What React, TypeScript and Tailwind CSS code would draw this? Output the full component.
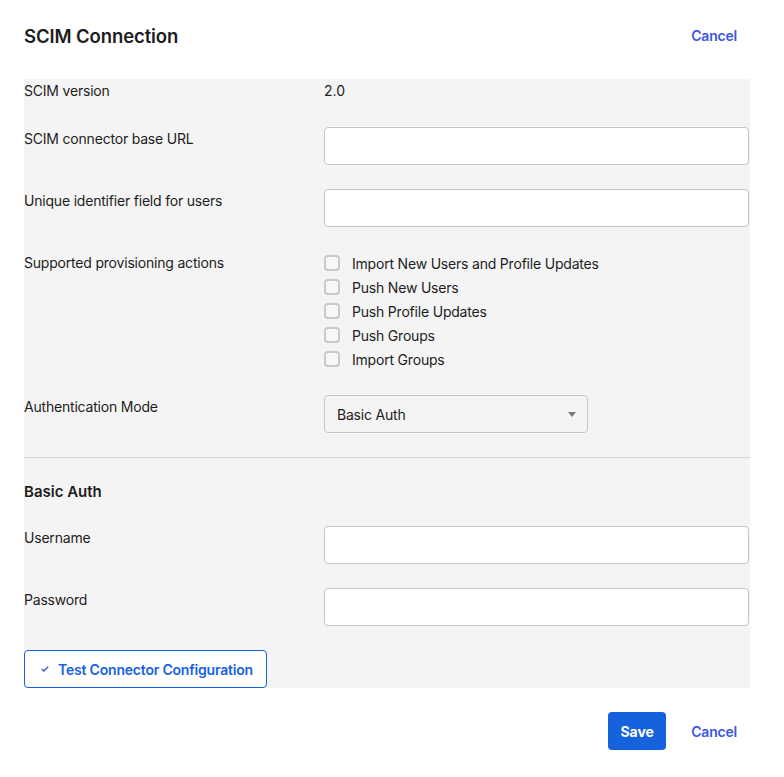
const ACTIONS = [
  'Import New Users and Profile Updates',
  'Push New Users',
  'Push Profile Updates',
  'Push Groups',
  'Import Groups',
];

function Label({ children }: { children: React.ReactNode }) {
  return <div className="w-[300px] shrink-0 pt-[2px] text-[14px] leading-5 tracking-[-0.2px] text-[#1d1d21]">{children}</div>;
}

function TextInput() {
  return <input type="text" className="h-[38px] flex-1 rounded-[4px] border border-[#c4c4c9] bg-white px-3 text-sm outline-none" />;
}

export default function App() {
  return (
    <div className="min-h-screen bg-white font-['Inter',sans-serif] text-[#1d1d21]">
      <div className="w-[750px] pl-6">
        <header className="flex h-[79px] items-start justify-between pt-[24px]">
          <h1 className="text-[18.5px] leading-6 font-semibold tracking-[-0.1px]">SCIM Connection</h1>
          <button type="button" className="px-[13px] text-[14px] leading-6 font-semibold tracking-[-0.2px] text-[#3d58de]">
            Cancel
          </button>
        </header>

        <div className="bg-[#f4f4f4]">
          <div className="flex">
            <Label>SCIM version</Label>
            <div className="pt-[2px] text-[14px] leading-5">2.0</div>
          </div>

          <div className="mt-[26px] flex pr-px">
            <Label>SCIM connector base URL</Label>
            <TextInput />
          </div>

          <div className="mt-6 flex pr-px">
            <Label>Unique identifier field for users</Label>
            <TextInput />
          </div>

          <div className="mt-6 flex">
            <Label>Supported provisioning actions</Label>
            <div className="flex flex-col">
              {ACTIONS.map((a) => (
                <label key={a} className="flex h-6 items-center gap-3 text-[14px] tracking-[-0.2px] text-[#1d1d21]">
                  <span className="h-4 w-4 rounded-[4px] border-2 border-[#c8c8cd] bg-[#f7f7f7]" />
                  {a}
                </label>
              ))}
            </div>
          </div>

          <div className="mt-6 flex">
            <Label>Authentication Mode</Label>
            <div className="flex h-[38px] w-[264px] items-center justify-between rounded-[4px] border border-[#c4c4c9] bg-[#f4f4f4] pr-[11px] pl-[12px] text-[14px] tracking-[-0.2px]">
              <span>Basic Auth</span>
              <svg width="8" height="5" viewBox="0 0 8 5" className="fill-[#7a7a7a]">
                <path d="M0 0h8L4 5z" />
              </svg>
            </div>
          </div>

          <div className="mt-6 h-px bg-[#d2d2d6]" />

          <h2 className="mt-6 text-[15px] leading-5 font-semibold">Basic Auth</h2>

          <div className="mt-6 flex pr-px">
            <Label>Username</Label>
            <TextInput />
          </div>

          <div className="mt-6 flex pr-px">
            <Label>Password</Label>
            <TextInput />
          </div>

          <div className="mt-6 flex">
            <button
              type="button"
              className="flex h-[38px] w-[243px] items-center gap-[9px] rounded-[4px] border border-[#1662dd] bg-white pl-[16px] text-[14px] font-semibold tracking-[-0.2px] text-[#1662dd]"
            >
              <svg width="8" height="6" viewBox="0 0 8 6" fill="none" stroke="#3d58de" strokeWidth="1.5">
                <path d="M0.8 3l2 2L7.2 0.8" />
              </svg>
              Test Connector Configuration
            </button>
          </div>
        </div>

        <footer className="mt-6 flex items-center justify-end gap-3">
          <button type="button" className="h-[38px] w-[58px] rounded-[4px] bg-[#1662dd] text-[14px] font-bold text-white">
            Save
          </button>
          <button type="button" className="px-[13px] text-[14px] font-semibold tracking-[-0.2px] text-[#3d58de]">
            Cancel
          </button>
        </footer>
      </div>
    </div>
  );
}
